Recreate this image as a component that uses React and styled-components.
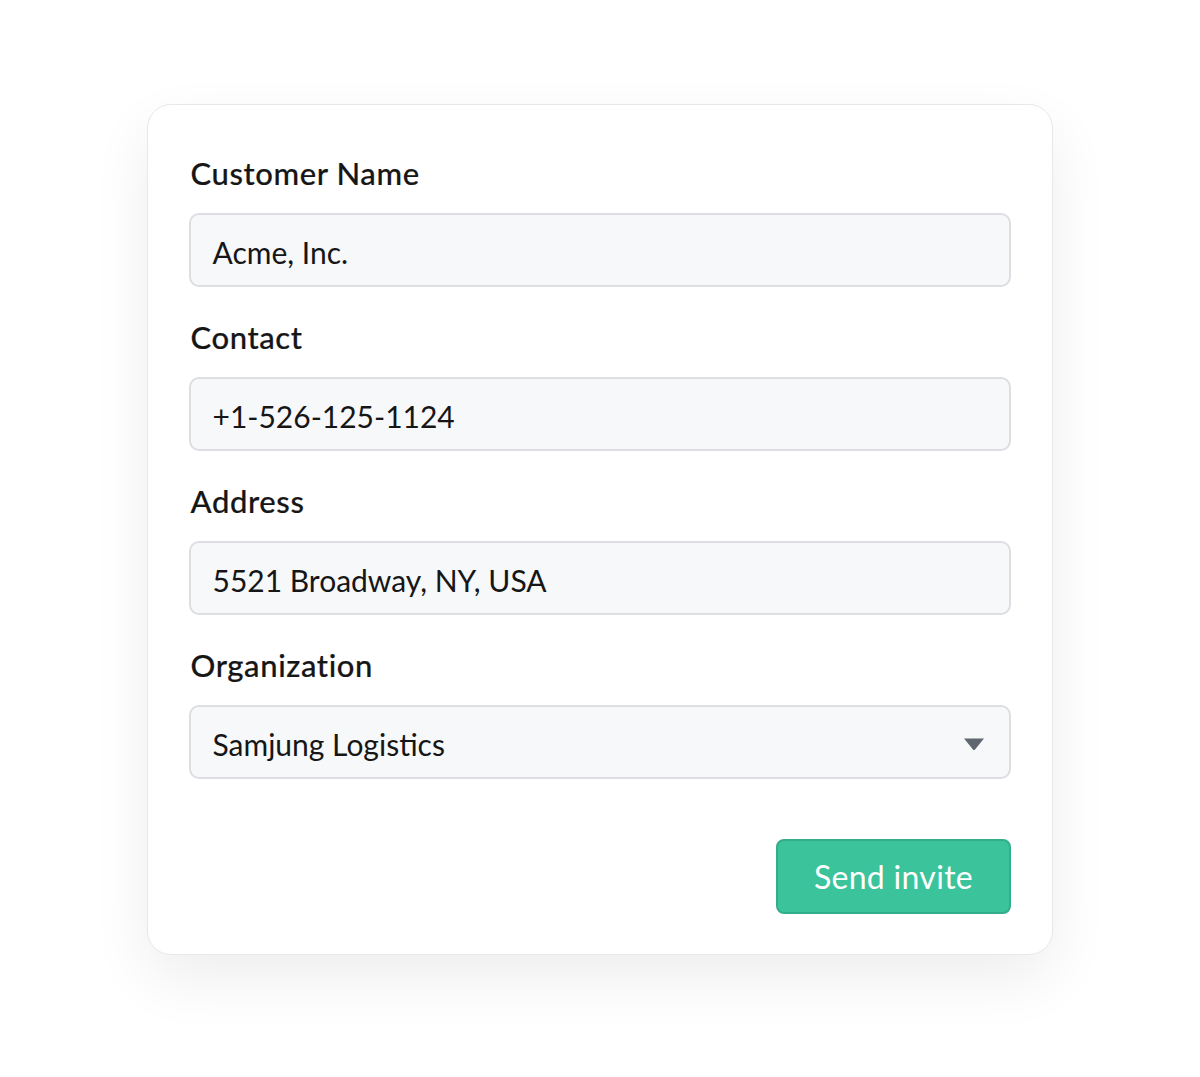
import React from 'react';
import styled, { createGlobalStyle } from 'styled-components';

const GlobalStyle = createGlobalStyle`
  html, body {
    margin: 0;
    padding: 0;
    background: #ffffff;
  }
  body {
    font-family: Lato, "Noto Sans", sans-serif;
    color: #1a1a1a;
  }
`;

const Page = styled.div`
  display: flex;
  justify-content: center;
  padding-top: 104px;
  height: 1077px;
  box-sizing: border-box;
`;

const Card = styled.form`
  width: 906px;
  height: 851px;
  box-sizing: border-box;
  padding: 48px 41px 40px 40.5px;
  background: #fff;
  border: 1.5px solid #e8e8e8;
  border-radius: 24px;
  box-shadow: 0 24px 60px rgba(0, 0, 0, 0.07);
  display: flex;
  flex-direction: column;
`;

const Field = styled.div`
  display: flex;
  flex-direction: column;
  margin-bottom: 30px;
`;

const Label = styled.label`
  font-size: 31px;
  font-weight: 500;
  -webkit-text-stroke: 0.2px #161616;
  letter-spacing: 0.6px;
  color: #161616;
  padding-left: 2px;
  line-height: 40px;
  margin-bottom: 20px;
`;

const Input = styled.div`
  height: 74px;
  box-sizing: border-box;
  border: 2px solid #dcdee2;
  border-radius: 10px;
  background: #f7f8fa;
  padding: 3px 22px 0;
  display: flex;
  align-items: center;
  justify-content: space-between;
  font-size: 30px;
  color: #161616;
`;

const Caret = styled.svg`
  width: 22px;
  height: 14px;
  margin-right: 2px;
`;

const Footer = styled.div`
  margin-top: auto;
  display: flex;
  justify-content: flex-end;
`;

const Button = styled.button`
  width: 235px;
  height: 75px;
  border: 2px solid #34ad8a;
  border-radius: 8px;
  background: #3bc39b;
  color: #fff;
  font-family: inherit;
  font-size: 32px;
  letter-spacing: 0.3px;
  cursor: pointer;
`;

const fields = [
  { label: 'Customer Name', value: 'Acme, Inc.' },
  { label: 'Contact', value: '+1-526-125-1124' },
  { label: 'Address', value: '5521 Broadway, NY, USA' },
  { label: 'Organization', value: 'Samjung Logistics', select: true },
];

export default function App() {
  return (
    <>
      <GlobalStyle />
      <Page>
        <Card>
          {fields.map((f) => (
            <Field key={f.label}>
              <Label>{f.label}</Label>
              <Input>
                {f.value}
                {f.select && (
                  <Caret viewBox="0 0 22 14">
                    <path d="M1 1.5 L21 1.5 L12 12.5 Q11 13.5 10 12.5 Z" fill="#5f6670" />
                  </Caret>
                )}
              </Input>
            </Field>
          ))}
          <Footer>
            <Button type="button">Send invite</Button>
          </Footer>
        </Card>
      </Page>
    </>
  );
}
